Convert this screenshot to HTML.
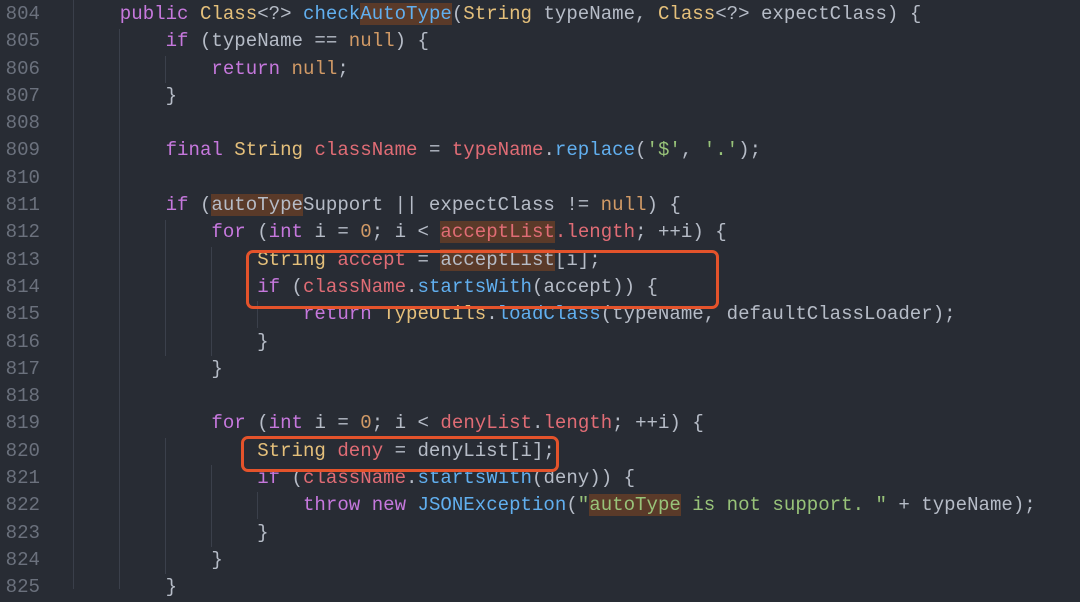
<!DOCTYPE html>
<html><head><meta charset="utf-8"><style>
body{margin:0;width:1080px;height:589px;background:#282c34;overflow:hidden;position:relative;font-family:"Liberation Mono",monospace;}
.ln{position:absolute;left:0;top:1px;width:40px;text-align:right;color:#6b717d;font-size:19.1px;line-height:27.3px;white-space:pre;}
.gut{position:absolute;left:73px;top:0;width:1px;height:589px;background:#3a3f4a;}
pre{margin:0;position:absolute;left:74px;top:1px;font-family:"Liberation Mono",monospace;font-size:19.08px;line-height:27.3px;color:#b6bcc7;}
.k{color:#c678dd}.t{color:#e5c07b}.f{color:#61afef}.v{color:#e06c75}.s{color:#98c379}.n{color:#d19a66}
.h{background:#5a3a29}
.g{position:absolute;width:1px;background:#3b404b;}
.box{position:absolute;border:3px solid #e4532b;border-radius:7px;}
</style></head><body>
<div class="gut"></div>
<div class="ln">804
805
806
807
808
809
810
811
812
813
814
815
816
817
818
819
820
821
822
823
824
825</div>
<div class="g" style="left:119px;top:29px;height:560px"></div>
<div class="g" style="left:165px;top:56px;height:27px"></div>
<div class="g" style="left:165px;top:220px;height:136px"></div>
<div class="g" style="left:211px;top:247px;height:109px"></div>
<div class="g" style="left:165px;top:438px;height:136px"></div>
<div class="g" style="left:211px;top:465px;height:82px"></div>
<div class="g" style="left:257px;top:301px;height:27px"></div>
<div class="g" style="left:257px;top:492px;height:27px"></div>
<pre>    <span class="k">public</span> <span class="t">Class</span>&lt;?&gt; <span class="f">check<span class="h">AutoType</span></span>(<span class="t">String</span> typeName, <span class="t">Class</span>&lt;?&gt; expectClass) {
        <span class="k">if</span> (typeName == <span class="n">null</span>) {
            <span class="k">return</span> <span class="n">null</span>;
        }

        <span class="k">final</span> <span class="t">String</span> <span class="v">className</span> = <span class="v">typeName</span>.<span class="f">replace</span>(<span class="s">'$'</span>, <span class="s">'.'</span>);

        <span class="k">if</span> (<span class="h">autoType</span>Support || expectClass != <span class="n">null</span>) {
            <span class="k">for</span> (<span class="k">int</span> i = <span class="n">0</span>; i &lt; <span class="v h">acceptList</span><span class="v">.length</span>; ++i) {
                <span class="t">String</span> <span class="v">accept</span> = <span class="h">acceptList</span>[i];
                <span class="k">if</span> (<span class="v">className</span>.<span class="f">startsWith</span>(accept)) {
                    <span class="k">return</span> <span class="t">TypeUtils</span>.<span class="f">loadClass</span>(typeName, defaultClassLoader);
                }
            }

            <span class="k">for</span> (<span class="k">int</span> i = <span class="n">0</span>; i &lt; <span class="v">denyList</span>.<span class="v">length</span>; ++i) {
                <span class="t">String</span> <span class="v">deny</span> = denyList[i];
                <span class="k">if</span> (<span class="v">className</span>.<span class="f">startsWith</span>(deny)) {
                    <span class="k">throw</span> <span class="k">new</span> <span class="f">JSONException</span>(<span class="s">"<span class="h">autoType</span> is not support. "</span> + typeName);
                }
            }
        }</pre>
<div class="box" style="left:246px;top:250px;width:467px;height:53px"></div>
<div class="box" style="left:241px;top:436px;width:312px;height:30px"></div>
</body></html>
